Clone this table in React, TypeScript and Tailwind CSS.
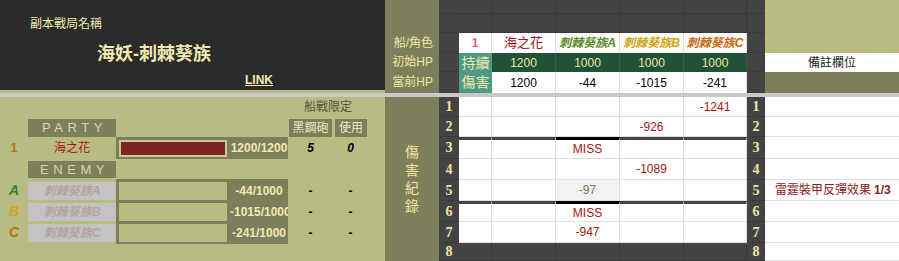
import React from 'react';

const FONT = "font-['Liberation_Sans','Noto_Sans_CJK_TC',sans-serif]";

const enemies = [
  { key: 'A', name: '刺棘葵族A', hp: '-44/1000', color: 'text-[#3f7f2a]' },
  { key: 'B', name: '刺棘葵族B', hp: '-1015/1000', color: 'text-[#d2a514]' },
  { key: 'C', name: '刺棘葵族C', hp: '-241/1000', color: 'text-[#c46a14]' },
];

// damage log, one entry per row; cells = 1 / 海之花 / A / B / C
const logRows: { cells: string[]; note?: boolean }[] = [
  { cells: ['', '', '', '', '-1241'] },
  { cells: ['', '', '', '-926', ''] },
  { cells: ['', '', 'MISS', '', ''] },
  { cells: ['', '', '', '-1089', ''] },
  { cells: ['', '', '-97', '', ''], note: true },
  { cells: ['', '', 'MISS', '', ''] },
  { cells: ['', '', '-947', '', ''] },
  { cells: ['', '', '', '', ''] },
];

const RowNo = ({ n }: { n?: number }) => (
  <div className="bg-[#434343] border-b border-[#3a3a3a] flex items-center justify-center font-['Liberation_Serif',serif] font-bold text-[14px] text-[#efe6a6]">
    {n}
  </div>
);

const DarkCell = () => <div className="bg-[#434343] border-r border-b border-[#393939]" />;

const TopLeft = () => (
  <div className="w-[385px] flex flex-col">
    <div className="h-[90px] bg-[#2b2b2b] flex flex-col text-[#f0eab0]">
      <div className="pl-[30px] pt-[16px] text-[12px] leading-[17px]">副本戰局名稱</div>
      <div className="pl-[97px] pt-[9px] text-[18px] leading-[24px] font-bold">海妖-刺棘葵族</div>
      <div className="pl-[245px] pt-[6px] text-[12px] leading-[16px] font-bold underline">LINK</div>
    </div>
    <div className="h-[3px] bg-[#b9bc82]" />
  </div>
);

const TopSheet = () => (
  <div className="w-[514px] grid grid-cols-[54px_20px_33px_64px_64px_64px_63px_18px_134px] grid-rows-[14px_19px_20px_19px_21px] text-[12px]">
    {/* row 1 */}
    <div className="row-span-5 bg-[#7d7f5a] flex flex-col pt-[33px] pr-[6px] text-right text-[12px] text-[#efe6a6]">
      <div className="h-[20px] leading-[20px]">船/角色</div>
      <div className="h-[19px] leading-[19px]">初始HP</div>
      <div className="h-[21px] leading-[21px]">當前HP</div>
    </div>
    <RowNo />
    <DarkCell />
    <DarkCell />
    <DarkCell />
    <DarkCell />
    <DarkCell />
    <RowNo />
    <div className="row-span-3 bg-[#b9bc82]" />
    {/* row 2 */}
    <RowNo />
    <DarkCell />
    <DarkCell />
    <DarkCell />
    <DarkCell />
    <DarkCell />
    <RowNo />
    {/* row 3 */}
    <RowNo />
    <div className="bg-white border-r border-[#e0e0e0] flex items-center justify-center text-[#e0607a] font-bold">1</div>
    <div className="bg-white border-r border-[#e0e0e0] flex items-center justify-center text-[#a31515] text-[13px]">海之花</div>
    <div className="bg-[#fbfbf6] border-r border-[#e0e0e0] flex items-center justify-center italic font-bold text-[#5d8a2c]">刺棘葵族A</div>
    <div className="bg-[#fbfbf6] border-r border-[#e0e0e0] flex items-center justify-center italic font-bold text-[#d2a514]">刺棘葵族B</div>
    <div className="bg-[#fbfbf6] border-r border-[#e0e0e0] flex items-center justify-center italic font-bold text-[#c46a14]">刺棘葵族C</div>
    <RowNo />
    {/* row 4 */}
    <RowNo />
    <div className="row-span-2 bg-[#4f9a83] flex flex-col items-center justify-center text-[14px] leading-[19px] text-[#f2eab0]">
      <span>持續</span>
      <span>傷害</span>
    </div>
    {['1200', '1000', '1000', '1000'].map((v, i) => (
      <div key={i} className="bg-[#1f5236] border-r border-[#2f6045] flex items-center justify-center text-[#efe6a6]">
        {v}
      </div>
    ))}
    <RowNo />
    <div className="bg-white flex items-center justify-center text-[12px] text-[#222]">備註欄位</div>
    {/* row 5 */}
    <RowNo />
    {['1200', '-44', '-1015', '-241'].map((v, i) => (
      <div key={i} className="bg-white border-r border-[#e0e0e0] flex items-center justify-center text-black">
        {v}
      </div>
    ))}
    <RowNo />
    <div className="bg-[#7d7f5a]" />
  </div>
);

const LeftPanel = () => (
  <div className="w-[385px] bg-[#b9bc82] grid grid-cols-[28px_88px_172px_45px_35px_17px] grid-rows-[20px_20px_22px_21px_21px_21px_21px_18px] text-[12px]">
    {/* row 1 */}
    <div className="col-start-4 col-span-2 flex items-center justify-center text-[12px] text-[#55553a]">船戰限定</div>
    {/* row 2 */}
    <div className="row-start-2 col-start-2 pt-[2px]">
      <div className="h-[18px] bg-[#7d7f5a] flex items-center justify-center text-[13px] tracking-[0.35em] pl-[5px] text-[#d6d7a6]">PARTY</div>
    </div>
    <div className="row-start-2 col-start-4 pt-[2px] pl-[1px]">
      <div className="h-[18px] w-[43px] bg-[#7d7f5a] flex items-center justify-center text-[12px] text-[#eeeac4]">黑鋼砲</div>
    </div>
    <div className="row-start-2 col-start-5 pt-[2px] pl-[2px]">
      <div className="h-[18px] w-[32px] bg-[#7d7f5a] flex items-center justify-center text-[12px] text-[#eeeac4]">使用</div>
    </div>
    {/* row 3 party */}
    <div className="row-start-3 col-start-1 flex items-center justify-center font-bold text-[13px] text-[#c07010]">1</div>
    <div className="row-start-3 col-start-2 flex items-center justify-center text-[#a31515]">海之花</div>
    <div className="row-start-3 col-start-3 bg-[#7d7f5a] flex items-center pl-[3px]">
      <div className="w-[108px] h-[17px] bg-[#c8c994] p-[2px]">
        <div className="h-full bg-[#7f2424]" />
      </div>
      <div className="w-[58px] ml-[3px] overflow-hidden whitespace-nowrap text-center font-bold text-[12px] text-[#efe9b4]">1200/1200</div>
    </div>
    <div className="row-start-3 col-start-4 flex items-center justify-center italic font-bold text-black">5</div>
    <div className="row-start-3 col-start-5 flex items-center justify-center italic font-bold text-black">0</div>
    {/* row 4 */}
    <div className="row-start-4 col-start-2 pt-[2px]">
      <div className="h-[17px] bg-[#7d7f5a] flex items-center justify-center text-[13px] tracking-[0.35em] pl-[5px] text-[#d6d7a6]">ENEMY</div>
    </div>
    {/* enemies */}
    <div className="row-start-5 row-span-3 col-start-3 -my-px bg-[#7d7f5a] flex flex-col gap-[3px] py-[3px] pl-[3px]">
      {enemies.map((e) => (
        <div key={e.key} className="flex-1 flex items-center">
          <div className="w-[108px] h-full bg-[#b9bc82]" />
          <div className="w-[58px] ml-[3px] overflow-hidden whitespace-nowrap text-center font-bold text-[12px] text-[#efe9b4]">{e.hp}</div>
        </div>
      ))}
    </div>
    {enemies.map((e, i) => {
      const row = i === 0 ? 'row-start-5' : i === 1 ? 'row-start-6' : 'row-start-7';
      return (
        <React.Fragment key={e.key}>
          <div className={`col-start-1 ${row} flex items-center justify-center italic font-bold text-[14px] ${e.color}`}>{e.key}</div>
          <div className={`col-start-2 ${row} pt-[2px]`}>
            <div className="h-[18px] bg-[#c3c3c3] flex items-center justify-center italic font-bold text-[12px] text-[#b3a4a0]">{e.name}</div>
          </div>
          <div className={`col-start-4 ${row} flex items-center justify-center font-bold text-black`}>-</div>
          <div className={`col-start-5 ${row} flex items-center justify-center font-bold text-black`}>-</div>
        </React.Fragment>
      );
    })}
  </div>
);

const LogSheet = () => (
  <div className="w-[514px] grid grid-cols-[54px_20px_33px_64px_64px_64px_63px_18px_134px] grid-rows-[20px_20px_22px_21px_21px_21px_21px_18px] text-[12px]">
    {logRows.map((row, r) => {
      const thick = r === 2 || r === 5;
      const last = r === 7;
      return (
        <React.Fragment key={r}>
          {r === 0 && (
            <div className="row-span-8 bg-[#7d7f5a] flex flex-col items-center justify-center text-[14px] leading-[18px] text-[#efe6a6]">
              <span>傷</span>
              <span>害</span>
              <span>紀</span>
              <span>錄</span>
            </div>
          )}
          <RowNo n={r + 1} />
          {row.cells.map((c, ci) => {
            if (last) return <DarkCell key={ci} />;
            const border = thick
              ? ci === 2
                ? 'border-t-[3px] border-t-black'
                : 'border-t-[3px] border-t-[#434343]'
              : '';
            const shaded = r === 4 && ci === 2;
            return (
              <div
                key={ci}
                className={`${shaded ? 'bg-[#f2f2f2] text-[#5e8a45]' : 'bg-white text-[#a31515]'} border-r border-b border-r-[#e0e0e0] border-b-[#e0e0e0] ${border} flex items-center justify-center`}
              >
                {c}
              </div>
            );
          })}
          <RowNo n={r + 1} />
          <div className="bg-white border-b border-[#e0e0e0] flex items-center pl-[10px] whitespace-nowrap text-[12px] text-[#8b1a1a]">
            {row.note && (
              <>
                雷霆裝甲反彈效果 <span className="ml-[3px] font-bold">1/3</span>
              </>
            )}
          </div>
        </React.Fragment>
      );
    })}
  </div>
);

export default function App() {
  return (
    <div className={`w-[899px] h-[261px] overflow-hidden bg-white ${FONT}`}>
      <div className="flex">
        <TopLeft />
        <TopSheet />
      </div>
      <div className="h-[4px] bg-[#c8c8c8]" />
      <div className="flex">
        <LeftPanel />
        <LogSheet />
      </div>
    </div>
  );
}
